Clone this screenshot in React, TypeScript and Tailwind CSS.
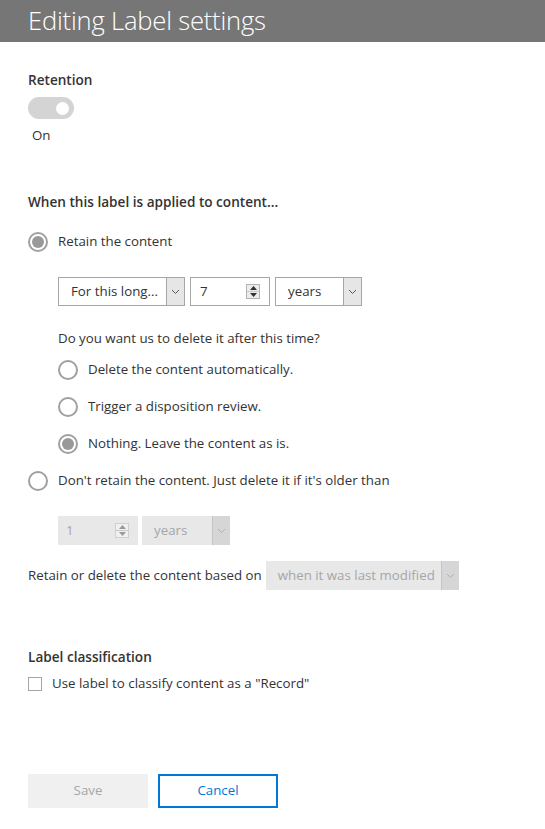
import React from 'react';

const font = { fontFamily: '"Open Sans", "Noto Sans", sans-serif' };

function Chevron({ color = '#666' }: { color?: string }) {
  return (
    <svg width="9" height="6" viewBox="0 0 9 6" fill="none">
      <polyline points="1,1 4.5,4.5 8,1" stroke={color} strokeWidth="1" />
    </svg>
  );
}

function Spin({ disabled }: { disabled?: boolean }) {
  const c = disabled ? '#9a9a9a' : '#333';
  return (
    <div className={`flex flex-col w-[14px] h-[15px] border ${disabled ? 'border-[#d0d0d0] bg-[#f0f0f0]' : 'border-[#b4b4b4] bg-[#ececec]'}`}>
      <div className="flex-1 flex items-center justify-center border-b border-[#c8c8c8]">
        <svg width="7" height="4" viewBox="0 0 7 4"><polygon points="0,4 3.5,0 7,4" fill={c} /></svg>
      </div>
      <div className="flex-1 flex items-center justify-center">
        <svg width="7" height="4" viewBox="0 0 7 4"><polygon points="0,0 3.5,4 7,0" fill={c} /></svg>
      </div>
    </div>
  );
}

function Select({ label, width, disabled }: { label: string; width: string; disabled?: boolean }) {
  return (
    <div
      className={`flex items-stretch h-[29px] ${width} ${
        disabled ? 'bg-[#e8e8e8] text-[#a6a6a6]' : 'bg-white border border-[#a6a6a6] text-[#333]'
      }`}
    >
      <span className="flex-1 pl-3 flex items-center text-[13.3px] whitespace-nowrap">{label}</span>
      <span
        className={`w-[18px] flex items-center justify-center border-l ${
          disabled ? 'bg-[#d6d6d6] border-[#c4c4c4]' : 'bg-[#e6e6e6] border-[#a6a6a6]'
        }`}
      >
        <Chevron color={disabled ? '#b0b0b0' : '#555'} />
      </span>
    </div>
  );
}

function NumberBox({ value, disabled }: { value: string; disabled?: boolean }) {
  return (
    <div
      className={`flex items-center justify-between h-[29px] w-[80px] pr-[9px] ${
        disabled ? 'bg-[#e8e8e8] text-[#a6a6a6] pl-2' : 'bg-white border border-[#a6a6a6] text-[#333] pl-[9px]'
      }`}
    >
      <span className="text-[13.3px]">{value}</span>
      <Spin disabled={disabled} />
    </div>
  );
}

function Radio({ checked, label }: { checked?: boolean; label: string }) {
  return (
    <div className="flex items-center gap-[10px] h-5">
      <span className="w-5 h-5 rounded-full border-2 border-[#a0a0a0] flex items-center justify-center bg-white">
        {checked && <span className="w-[12px] h-[12px] rounded-full bg-[#999]" />}
      </span>
      <span className="text-[13.3px] text-[#333]">{label}</span>
    </div>
  );
}

export default function App() {
  return (
    <div className="w-[545px] h-[829px] bg-white overflow-hidden" style={font}>
      <div className="h-[42px] bg-[#767676] flex items-center px-7">
        <h1 className="text-[25.6px] font-light text-white leading-none tracking-[-0.2px]">Editing Label settings</h1>
      </div>

      <div className="px-7">
        <h2 className="mt-7 text-[13.6px] font-semibold text-[#333] leading-5">Retention</h2>
        <div className="mt-[7px] w-[46px] h-[22px] rounded-full bg-[#d4d4d4] flex items-center justify-end pr-[5px]">
          <span className="w-[13px] h-[13px] rounded-full bg-white" />
        </div>
        <p className="mt-[6px] ml-1 text-[13.3px] text-[#333] leading-5">On</p>

        <h2 className="mt-[47px] text-[13.6px] font-semibold text-[#333] leading-5">When this label is applied to content...</h2>

        <div className="mt-5">
          <Radio checked label="Retain the content" />
        </div>

        <div className="ml-[30px]">
          <div className="mt-[25px] flex gap-[5px]">
            <Select label="For this long..." width="w-[127px]" />
            <NumberBox value="7" />
            <Select label="years" width="w-[87px]" />
          </div>

          <p className="mt-[22px] text-[13.3px] text-[#333] leading-5">Do you want us to delete it after this time?</p>
          <div className="mt-3 flex flex-col gap-[17px]">
            <Radio label="Delete the content automatically." />
            <Radio label="Trigger a disposition review." />
            <Radio checked label="Nothing. Leave the content as is." />
          </div>
        </div>

        <div className="mt-[17px]">
          <Radio label="Don't retain the content. Just delete it if it's older than" />
        </div>

        <div className="ml-[30px] mt-[25px] flex gap-1">
          <NumberBox value="1" disabled />
          <Select label="years" width="w-[88px]" disabled />
        </div>

        <div className="mt-4 flex items-center gap-1">
          <span className="text-[13.3px] text-[#333]">Retain or delete the content based on</span>
          <Select label="when it was last modified" width="w-[193px]" disabled />
        </div>

        <h2 className="mt-[57px] text-[13.6px] font-semibold text-[#333] leading-5">Label classification</h2>
        <label className="mt-[7px] flex items-center gap-[10px]">
          <span className="w-[14px] h-[14px] border border-[#a6a6a6] bg-white" />
          <span className="text-[13.3px] text-[#333]">Use label to classify content as a "Record"</span>
        </label>

        <div className="mt-[80px] flex gap-[10px]">
          <button className="w-[120px] h-[34px] bg-[#f0f0f0] text-[13.3px] text-[#a6a6a6]">Save</button>
          <button className="w-[120px] h-[34px] border-2 border-[#0078d7] text-[13.3px] text-[#0078d7] bg-white">Cancel</button>
        </div>
      </div>
    </div>
  );
}
